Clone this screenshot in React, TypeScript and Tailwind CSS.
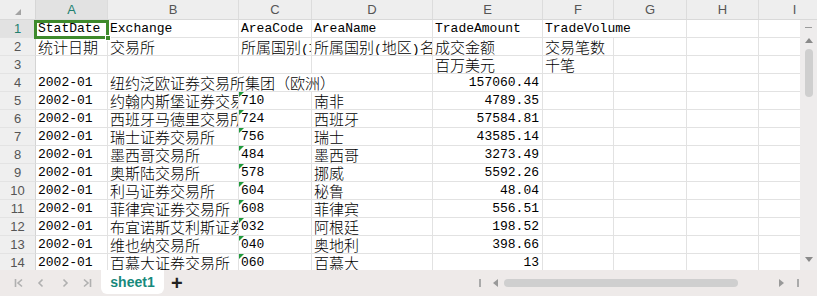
import React from 'react';
import clsx from 'clsx';

type Cell = { t?: string; right?: boolean; tri?: boolean; span?: 2 | 3 };

const GRID = 'grid grid-cols-[36px_72px_131px_73px_121px_110px_71px_73px_72px_72px]';
const LETTERS = ['A', 'B', 'C', 'D', 'E', 'F', 'G', 'H', 'I'];
const CJK = /([\u3000-\u9fff\uff00-\uffef]+)/;

const rows: Cell[][] = [
  [{ t: 'StatDate' }, { t: 'Exchange' }, { t: 'AreaCode' }, { t: 'AreaName' }, { t: 'TradeAmount' }, { t: 'TradeVolume', span: 2 }, {}, {}],
  [{ t: '统计日期' }, { t: '交易所' }, { t: '所属国别(地区)代码' }, { t: '所属国别(地区)名称' }, { t: '成交金额' }, { t: '交易笔数' }, {}, {}, {}],
  [{}, {}, {}, {}, { t: '百万美元' }, { t: '千笔' }, {}, {}, {}],
  [{ t: '2002-01' }, { t: '纽约泛欧证券交易所集团（欧洲）', span: 3 }, { t: '157060.44', right: true }, {}, {}, {}, {}],
  [{ t: '2002-01' }, { t: '约翰内斯堡证券交易所' }, { t: '710', tri: true }, { t: '南非' }, { t: '4789.35', right: true }, {}, {}, {}, {}],
  [{ t: '2002-01' }, { t: '西班牙马德里交易所' }, { t: '724', tri: true }, { t: '西班牙' }, { t: '57584.81', right: true }, {}, {}, {}, {}],
  [{ t: '2002-01' }, { t: '瑞士证券交易所' }, { t: '756', tri: true }, { t: '瑞士' }, { t: '43585.14', right: true }, {}, {}, {}, {}],
  [{ t: '2002-01' }, { t: '墨西哥交易所' }, { t: '484', tri: true }, { t: '墨西哥' }, { t: '3273.49', right: true }, {}, {}, {}, {}],
  [{ t: '2002-01' }, { t: '奥斯陆交易所' }, { t: '578', tri: true }, { t: '挪威' }, { t: '5592.26', right: true }, {}, {}, {}, {}],
  [{ t: '2002-01' }, { t: '利马证券交易所' }, { t: '604', tri: true }, { t: '秘鲁' }, { t: '48.04', right: true }, {}, {}, {}, {}],
  [{ t: '2002-01' }, { t: '菲律宾证券交易所' }, { t: '608', tri: true }, { t: '菲律宾' }, { t: '556.51', right: true }, {}, {}, {}, {}],
  [{ t: '2002-01' }, { t: '布宜诺斯艾利斯证券交易所' }, { t: '032', tri: true }, { t: '阿根廷' }, { t: '198.52', right: true }, {}, {}, {}, {}],
  [{ t: '2002-01' }, { t: '维也纳交易所' }, { t: '040', tri: true }, { t: '奥地利' }, { t: '398.66', right: true }, {}, {}, {}, {}],
  [{ t: '2002-01' }, { t: '百慕大证券交易所' }, { t: '060', tri: true }, { t: '百慕大' }, { t: '13', right: true }, {}, {}, {}, {}],
];

const Txt = ({ s }: { s: string }) => (
  <>
    {s
      .split(CJK)
      .filter(Boolean)
      .map((p, i) =>
        CJK.test(p) ? (
          <span key={i} className="font-['Noto_Sans_CJK_SC',sans-serif] text-[15px] font-light">
            {p}
          </span>
        ) : (
          <span key={i}>{p}</span>
        )
      )}
  </>
);

const Tri = ({ dir, className }: { dir: 'up' | 'down' | 'left' | 'right'; className?: string }) => {
  const pts = {
    up: '0,6 4,1 8,6',
    down: '0,1 8,1 4,6',
    left: '6,0 6,8 1,4',
    right: '1,0 1,8 6,4',
  }[dir];
  return (
    <svg width="8" height="8" viewBox="0 0 8 8" className={className}>
      <polygon points={pts} fill="currentColor" />
    </svg>
  );
};

export default function App() {
  return (
    <div className="w-[817px] h-[296px] bg-white overflow-hidden flex flex-col font-['Liberation_Sans',sans-serif] select-none">
      {/* column headers */}
      <div className="flex h-[20px] shrink-0 bg-[#eeeeee] border-b border-[#d9d9d9] overflow-hidden">
        <div className={clsx(GRID, 'shrink-0')}>
          <div className="relative border-r border-[#d6d6d6]">
            <svg width="6" height="6" viewBox="0 0 6 6" className="absolute left-[15px] top-[9px] text-[#a3a3a3]">
              <polygon points="6,0 6,6 0,6" fill="currentColor" />
            </svg>
          </div>
          {LETTERS.map((l, i) => (
            <div
              key={l}
              className={clsx(
                'flex items-center justify-center text-[13px] border-r border-[#dcdcdc]',
                i === 0 ? 'bg-[#e2e2e2] text-[#21806f]' : 'text-[#555]'
              )}
            >
              {l}
            </div>
          ))}
        </div>
      </div>

      <div className="flex flex-1 min-h-0">
        {/* sheet body */}
        <div className="relative flex-1 overflow-hidden">
          {rows.map((row, r) => (
            <div key={r} className={GRID}>
              <div
                className={clsx(
                  'h-[18px] flex items-center justify-center text-[13px] border-r border-b border-r-[#d4d4d4] border-b-[#e3e3e3]',
                  r === 0 ? 'bg-[#e2e2e2] text-[#21806f]' : 'bg-[#efefef] text-[#555]'
                )}
              >
                {r + 1}
              </div>
              {row.map((c, j) => (
                <div
                  key={j}
                  className={clsx(
                    "relative h-[18px] overflow-hidden whitespace-nowrap border-r border-b border-[#e2e2e2] leading-[17px] text-[13px] text-black font-['Liberation_Mono',monospace]",
                    c.right ? 'text-right pr-[3px]' : 'pl-[2px]',
                    c.span === 2 && 'col-span-2',
                    c.span === 3 && 'col-span-3'
                  )}
                >
                  {c.tri && (
                    <svg width="5" height="5" viewBox="0 0 5 5" className="absolute left-0 top-0">
                      <polygon points="0,0 5,0 0,5" fill="#1f9a3c" />
                    </svg>
                  )}
                  {c.t && <Txt s={c.t} />}
                </div>
              ))}
            </div>
          ))}

          {/* active cell A1 */}
          <div className="absolute left-[34px] top-0 w-[75px] h-[19px] border-[3px] border-[#3e8a2c]" />
          <div className="absolute left-[105px] top-[15px] w-[6px] h-[6px] bg-[#3e8a2c] border border-white" />
        </div>

        {/* vertical scrollbar */}
        <div className="w-[17px] shrink-0 bg-[#eeecec] flex flex-col items-center text-[#8a8a8a]">
          <div className="mt-[7px] w-[7px] h-[1px] bg-[#9a9a9a]" />
          <Tri dir="up" className="mt-[9px]" />
          <div className="mt-[4px] ml-[1px] w-[8px] h-[48px] rounded-full bg-[#cfcfcf]" />
          <div className="flex-1" />
          <Tri dir="down" className="mb-[6px]" />
        </div>
      </div>

      {/* bottom bar */}
      <div className="h-[26px] shrink-0 bg-[#eeeae9] flex items-start">
        <div className="flex items-center h-[25px] pl-[14px] gap-[12px] text-[#b0b0b0]">
          <svg width="10" height="10" viewBox="0 0 10 10" fill="none" stroke="currentColor" strokeWidth="1.6">
            <path d="M1.5 1v8M8 1.5L4 5l4 3.5" />
          </svg>
          <svg width="10" height="10" viewBox="0 0 10 10" fill="none" stroke="currentColor" strokeWidth="1.6">
            <path d="M6.5 1.5L3 5l3.5 3.5" />
          </svg>
          <svg width="10" height="10" viewBox="0 0 10 10" fill="none" stroke="currentColor" strokeWidth="1.6" className="ml-[2px]">
            <path d="M3.5 1.5L7 5l-3.5 3.5" />
          </svg>
          <svg width="10" height="10" viewBox="0 0 10 10" fill="none" stroke="currentColor" strokeWidth="1.6">
            <path d="M8.5 1v8M2 1.5L6 5 2 8.5" />
          </svg>
        </div>
        <div className="ml-[9px] w-[63px] h-[24px] bg-white rounded-b-[6px] flex items-center justify-center text-[14px] font-bold text-[#17897c]">
          sheet1
        </div>
        <div className="ml-[7px] h-[25px] flex items-center text-[20px] font-bold text-[#222] leading-none">+</div>
        <div className="flex-1" />
        <div className="flex items-center h-[25px] text-[#999]">
          <div className="w-[2px] h-[8px] bg-[#aaa]" />
          <Tri dir="left" className="ml-[11px]" />
          <div className="ml-[4px] w-[234px] h-[8px] rounded-full bg-[#cfcfcf]" />
          <div className="w-[40px]" />
          <Tri dir="right" />
          <div className="ml-[11px] w-[2px] h-[8px] bg-[#aaa]" />
          <div className="w-[18px]" />
        </div>
      </div>
    </div>
  );
}
